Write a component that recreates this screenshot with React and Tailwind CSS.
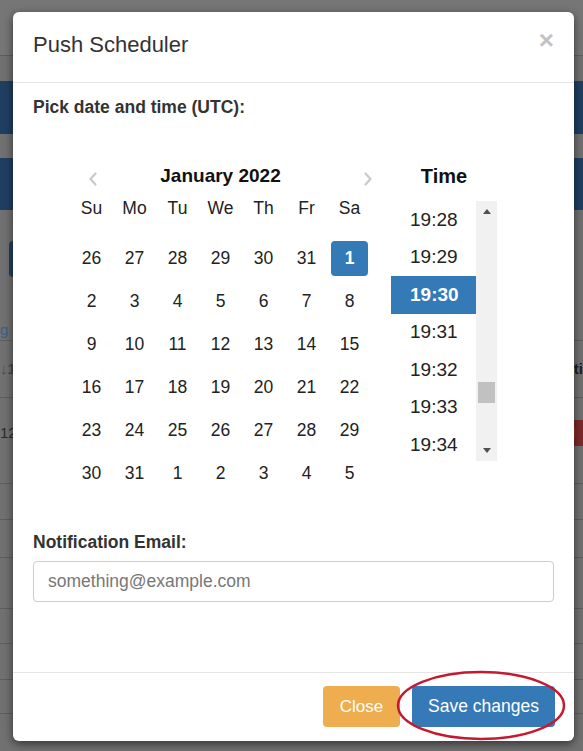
import React from "react";

const rows = [
  [26, 27, 28, 29, 30, 31, 1],
  [2, 3, 4, 5, 6, 7, 8],
  [9, 10, 11, 12, 13, 14, 15],
  [16, 17, 18, 19, 20, 21, 22],
  [23, 24, 25, 26, 27, 28, 29],
  [30, 31, 1, 2, 3, 4, 5],
];
const dayNames = ["Su", "Mo", "Tu", "We", "Th", "Fr", "Sa"];
const times = ["19:28", "19:29", "19:30", "19:31", "19:32", "19:33", "19:34"];

function Chevron({ dir }) {
  return (
    <svg width="12" height="16" viewBox="0 0 12 16">
      <path
        d={dir === "left" ? "M8.5 2.5 L3.5 8 L8.5 13.5" : "M3.5 2.5 L8.5 8 L3.5 13.5"}
        fill="none"
        stroke="#c9c9c9"
        strokeWidth="2.2"
        strokeLinecap="round"
        strokeLinejoin="round"
      />
    </svg>
  );
}

function Background() {
  const line = "h-px bg-[#5e5e5e]";
  return (
    <div className="flex flex-col w-full">
      <div className="h-[55px] bg-[#767676]" />
      <div className={line} />
      <div className="h-[25px]" />
      <div className="h-[53px] bg-[#1f3f62]" />
      <div className="h-[24px]" />
      <div className="h-[52px] bg-[#1f3f62]" />
      <div className="h-[31px]" />
      <div className="h-[36px] flex">
        <div className="ml-[9px] w-[30px] h-full rounded-[4px] bg-[#22405f]" />
      </div>
      <div className="h-[43px]" />
      <div className="h-[20px] flex items-center text-[15px] text-[#3d5f86]">g 2</div>
      <div className={line} />
      <div className="h-[56px] flex items-center justify-between text-[15px]">
        <span className="text-[#4a4a4a] font-bold">↓1</span>
        <span className="text-[#1e1e1e] font-bold">ti</span>
      </div>
      <div className={line} />
      <div className="h-[85px] flex flex-col">
        <div className="h-[20px]" />
        <div className="h-[30px] flex items-center justify-between text-[15px]">
          <span className="text-[#2a2a2a]">12</span>
          <span className="h-[26px] w-[14px] bg-[#7c2a2a] rounded-l-[3px] text-[#d9b3b3] text-[13px] pl-[3px] leading-[26px]">l</span>
        </div>
      </div>
      <div className={line} />
      <div className="h-[35px]" />
      <div className={line} />
      <div className="h-[37px]" />
      <div className={line} />
      <div className="h-[50px]" />
      <div className={line} />
      <div className="h-[34px]" />
      <div className={line} />
      <div className="h-[35px]" />
      <div className={line} />
      <div className="h-[33px]" />
      <div className={line} />
    </div>
  );
}

export default function App() {
  return (
    <div
      className="relative w-[583px] h-[751px] overflow-hidden bg-[#717171]"
      style={{ fontFamily: '"Liberation Sans", Arial, sans-serif' }}
    >
      <Background />

      <div className="absolute inset-0 pt-[12px] pl-[13px]">
        <div className="w-[561px] h-[729px] bg-white rounded-[6px] shadow-[0_3px_10px_rgba(0,0,0,0.55)] flex flex-col">
          {/* Header */}
          <div className="h-[71px] border-b border-[#e5e5e5] flex items-start justify-between pl-[20px] pr-[20px] shrink-0">
            <div className="mt-[20px] text-[22px] leading-[25px] text-[#333]">Push Scheduler</div>
            <div className="mt-[15px] text-[26px] leading-[26px] font-bold text-[#c2c2c2]">×</div>
          </div>

          {/* Body */}
          <div className="flex-1 flex flex-col px-[20px]">
            <div className="mt-[14px] text-[17.5px] leading-[20px] font-bold text-[#333]">
              Pick date and time (UTC):
            </div>

            <div className="mt-[43px] flex items-start">
              {/* Calendar */}
              <div className="ml-[37px] w-[301px] flex flex-col">
                <div className="h-[32px] w-[321px] grid grid-cols-[46px_1fr_46px] items-center">
                  <div className="flex justify-center pt-[6px]">
                    <Chevron dir="left" />
                  </div>
                  <div className="text-center pr-[20px] text-[19px] font-bold text-[#111]">January 2022</div>
                  <div className="flex justify-center pt-[6px]">
                    <Chevron dir="right" />
                  </div>
                </div>
                <div className="grid grid-cols-7 h-[33px] items-center">
                  {dayNames.map((d) => (
                    <div key={d} className="text-center text-[17.5px] text-[#222]">
                      {d}
                    </div>
                  ))}
                </div>
                <div className="mt-[12px] flex flex-col">
                  {rows.map((r, ri) => (
                    <div key={ri} className="grid grid-cols-7 h-[43px]">
                      {r.map((n, ci) => {
                        const sel = ri === 0 && ci === 6;
                        return (
                          <div key={ci} className="flex items-center justify-center">
                            {sel ? (
                              <div className="w-[37px] h-[35px] rounded-[4px] bg-[#337ab7] text-white font-bold text-[17.5px] flex items-center justify-center">
                                {n}
                              </div>
                            ) : (
                              <span className="text-[17.5px] text-[#222]">{n}</span>
                            )}
                          </div>
                        );
                      })}
                    </div>
                  ))}
                </div>
              </div>

              {/* Time */}
              <div className="ml-[20px] w-[106px] flex flex-col">
                <div className="h-[32px] flex items-center justify-center text-[20px] font-bold text-[#111]">
                  Time
                </div>
                <div className="mt-[9px] h-[260px] flex">
                  <div className="w-[85px] h-full overflow-hidden flex flex-col">
                    {times.map((t) => {
                      const sel = t === "19:30";
                      return (
                        <div
                          key={t}
                          className={
                            "h-[37.5px] shrink-0 flex items-center pl-[19px] text-[19px] " +
                            (sel ? "bg-[#337ab7] text-white font-bold" : "text-[#222]")
                          }
                        >
                          {t}
                        </div>
                      );
                    })}
                  </div>
                  <div className="w-[21px] h-full bg-[#f1f1f1] flex flex-col">
                    <div className="h-[21px] flex items-center justify-center">
                      <svg width="8" height="5" viewBox="0 0 8 5">
                        <path d="M4 0 L8 5 L0 5 Z" fill="#505050" />
                      </svg>
                    </div>
                    <div className="flex-1">
                      <div className="mt-[160px] mx-[2px] h-[21px] bg-[#c1c1c1]" />
                    </div>
                    <div className="h-[21px] flex items-center justify-center">
                      <svg width="8" height="5" viewBox="0 0 8 5">
                        <path d="M0 0 L8 0 L4 5 Z" fill="#505050" />
                      </svg>
                    </div>
                  </div>
                </div>
              </div>
            </div>

            <div className="mt-[37px] text-[17.5px] leading-[20px] font-bold text-[#333]">Notification Email:</div>
            <div className="mt-[9px] h-[41px] border border-[#cccccc] rounded-[4px] flex items-center px-[14px] text-[17.5px] text-[#777]">
              something@example.com
            </div>
          </div>

          {/* Footer */}
          <div className="h-[69px] border-t border-[#e5e5e5] flex items-start justify-end gap-[12px] pr-[19px] pt-[13px] shrink-0">
            <div className="w-[77px] h-[41px] rounded-[4px] bg-[#eead4e] text-white text-[17px] flex items-center justify-center">
              Close
            </div>
            <div className="w-[143px] h-[41px] rounded-[4px] bg-[#3579b6] text-white text-[17.5px] flex items-center justify-center">
              Save changes
            </div>
          </div>
        </div>
      </div>

      {/* red annotation ellipse */}
      <svg className="absolute left-0 top-0 pointer-events-none" width="583" height="751">
        <ellipse cx="481" cy="705.5" rx="83" ry="33.5" fill="none" stroke="#c41a30" strokeWidth="2.5" />
      </svg>
    </div>
  );
}
